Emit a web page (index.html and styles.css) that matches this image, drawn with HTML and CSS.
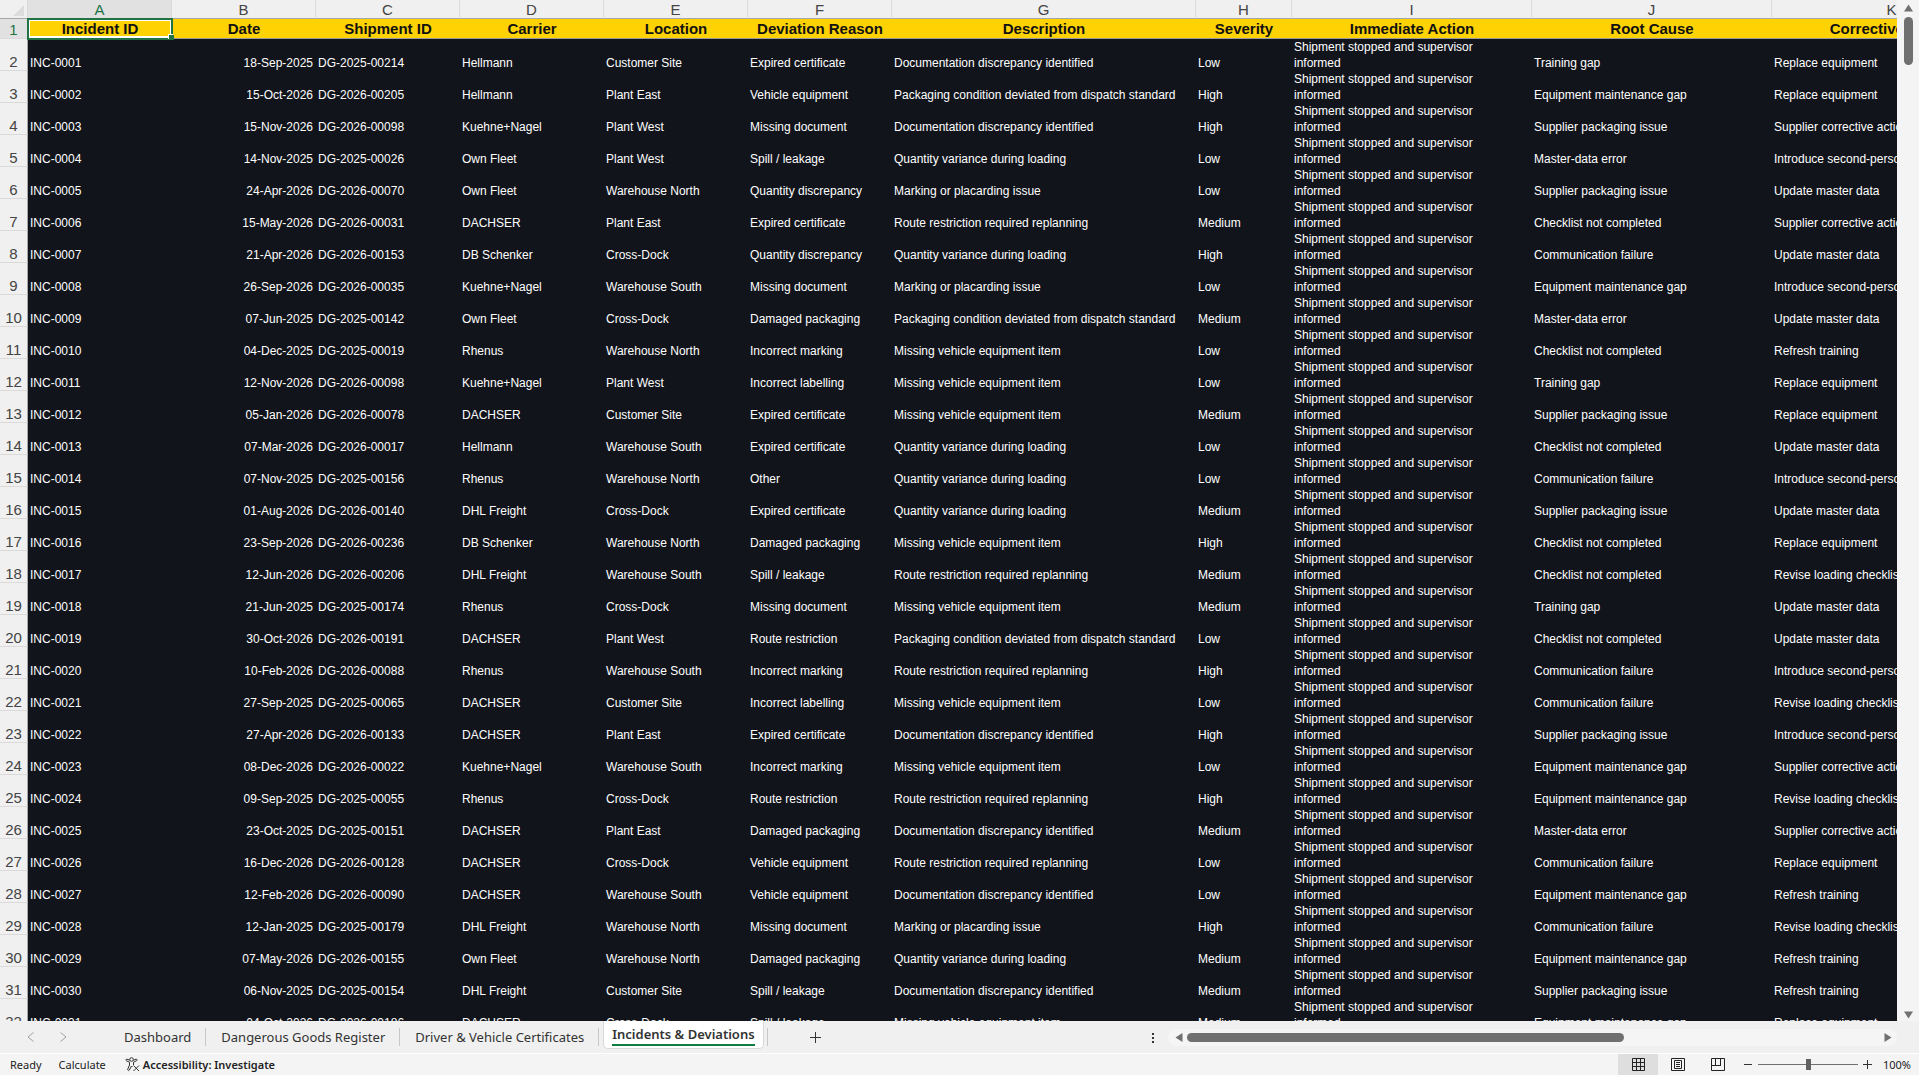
FILE: index.html
```html
<!DOCTYPE html>
<html lang="en">
<head>
  <meta charset="utf-8">
  <title>Incidents &amp; Deviations</title>
  <link rel="stylesheet" href="styles.css">
</head>

<body>

<main class="workbook">
  <div class="sheet-area">
    <div class="sheet">
      <table class="grid">
        <colgroup>
          <col class="col-num">
          <col class="col-m"><col class="col-m"><col class="col-m"><col class="col-m"><col class="col-m"><col class="col-m">
          <col class="col-xl"><col class="col-s"><col class="col-l"><col class="col-l"><col class="col-l">
        </colgroup>
        <thead>
          <tr class="letters">
            <th class="corner"><svg width="11" height="11" viewBox="0 0 11 11"><path d="M11 0V11H0Z" fill="#dcdcdc"/></svg></th>
            <th class="selected">A</th><th>B</th><th>C</th><th>D</th><th>E</th><th>F</th>
            <th>G</th><th>H</th><th>I</th><th>J</th><th>K</th>
          </tr>
          <tr class="titles">
            <th class="num selected">1</th>
            <th class="active-cell">Incident ID</th>
            <th>Date</th>
            <th>Shipment ID</th>
            <th>Carrier</th>
            <th>Location</th>
            <th>Deviation Reason</th>
            <th>Description</th>
            <th>Severity</th>
            <th>Immediate Action</th>
            <th>Root Cause</th>
            <th>Corrective Action</th>
          </tr>
        </thead>
        <tbody id="rows"></tbody>
      </table>
    </div>
    <div class="scroll-v">
      <button class="arrow" aria-label="Scroll up"><svg width="9" height="8" viewBox="0 0 9 8"><path d="M4.500 0.500L9 7.500H0Z"/></svg></button>
      <div class="thumb-v"></div>
      <button class="arrow arrow-end" aria-label="Scroll down"><svg width="9" height="8" viewBox="0 0 9 8"><path d="M4.500 7.500L9 0.500H0Z"/></svg></button>
    </div>
  </div>

  <div class="tab-bar">
    <div class="tab-nav">
      <button aria-label="Previous sheet"><svg width="8" height="10" viewBox="0 0 8 10"><path d="M6.500 0.500L1 5L6.500 9.500"/></svg></button>
      <button aria-label="Next sheet"><svg width="8" height="10" viewBox="0 0 8 10"><path d="M1.500 0.500L7 5L1.500 9.500"/></svg></button>
    </div>
    <nav class="tabs">
      <button class="tab">Dashboard</button>
      <button class="tab">Dangerous Goods Register</button>
      <button class="tab">Driver &amp; Vehicle Certificates</button>
      <button class="tab active"><span>Incidents &amp; Deviations</span></button>
    </nav>
    <button class="add" aria-label="New sheet"><svg width="11" height="11" viewBox="0 0 11 11"><path d="M5.500 0V11M0 5.500H11"/></svg></button>
    <div class="dots"><i></i><i></i><i></i></div>
    <div class="scroll-h">
      <button class="arrow" aria-label="Scroll left"><svg width="8" height="9" viewBox="0 0 8 9"><path d="M0.500 4.500L7.500 0V9Z"/></svg></button>
      <div class="thumb-h"></div>
      <button class="arrow arrow-end" aria-label="Scroll right"><svg width="8" height="9" viewBox="0 0 8 9"><path d="M7.500 4.500L0.500 0V9Z"/></svg></button>
    </div>
  </div>

  <footer class="status">
    <span>Ready</span>
    <span>Calculate</span>
    <button class="access">
      <svg width="15" height="15" viewBox="0 0 15 15"><circle cx="6.500" cy="2.500" r="1.800"/><path d="M4.700 3.200L2 2.200C0.800 2 0.500 3.300 1.500 3.800L4.500 5.200V8L2.700 12.300C2.500 13.500 3.800 14 4.400 13L6.500 9L7.500 10M8.300 3.200L11 2.200C12.200 2 12.500 3.300 11.500 3.800L8.500 5.200V8M8.500 8.500L14 14M14 8.500L8.500 14"/></svg>
      Accessibility: Investigate
    </button>
    <div class="views">
      <button class="current" aria-label="Normal"><svg width="13" height="13" viewBox="0 0 13 13"><path d="M0.500 0.500H12.500V12.500H0.500ZM4.500 0V13M8.500 0V13M0 4.500H13M0 8.500H13"/></svg></button>
      <button aria-label="Page layout"><svg width="14" height="13" viewBox="0 0 14 13"><path d="M0.500 0.500H13.500V12.500H0.500ZM3.500 2.500H10.500V10.500H3.500ZM5 4.500H9M5 6.500H9M5 8.500H9"/></svg></button>
      <button aria-label="Page break preview"><svg width="14" height="13" viewBox="0 0 14 13"><path d="M0.500 0.500H13.500V12.500H0.500ZM4.500 0V7.500M9.500 0V7.500M0 7.500H10"/></svg></button>
    </div>
    <div class="zoom">
      <button aria-label="Zoom out"><svg width="9" height="9" viewBox="0 0 9 9"><path d="M0 4.500H8"/></svg></button>
      <input type="range" min="0" max="100" value="50" aria-label="Zoom">
      <button aria-label="Zoom in"><svg width="9" height="9" viewBox="0 0 9 9"><path d="M0 4.500H9M4.500 0V9"/></svg></button>
      <button class="percent">100%</button>
    </div>
  </footer>
</main>

<script src="script.js"></script>
</body>
</html>
```

FILE: styles.css
```css
* {
  box-sizing: border-box;
}

body {
  margin: 0;
  font-family: "Liberation Sans", Arial, sans-serif;
  background: #f0f0f0;
}

button {
  border: none;
  padding: 0;
  background: none;
  font: inherit;
  color: inherit;
}

svg {
  display: block;
}

.workbook {
  display: flex;
  flex-direction: column;
  height: 100vh;
  overflow: hidden;
}

.sheet-area {
  display: flex;
  flex: 1;
  min-height: 0;
}

.sheet {
  flex: 1;
  min-width: 0;
  overflow: hidden;
  background: #11141b;
}

/* grid */
.grid {
  table-layout: fixed;
  width: 1984px;
  border-collapse: separate;
  border-spacing: 0;
  color: #fff;
  font-size: 12px;
  line-height: 16px;
}

.col-num { width: 28px; }
.col-s { width: 96px; }
.col-m { width: 144px; }
.col-l { width: 240px; }
.col-xl { width: 304px; }

.grid th,
.grid td {
  padding: 0 2px;
}

.letters th {
  height: 19px;
  padding-top: 2px;
  background: #f0f0f0;
  border-right: 1px solid #dadada;
  border-bottom: 1px solid #a6a6a6;
  color: #444;
  font-size: 15px;
  font-weight: normal;
  line-height: 16px;
}

.letters .corner {
  padding: 2px 3px 0 13px;
}

.letters .selected,
.grid .num.selected {
  background: #e1e1e1;
  color: #217346;
}

.titles th {
  height: 20px;
  background: #ffd204;
  border-bottom: 1px solid #9a9a9a;
  color: #111;
  font-size: 15px;
  line-height: 19px;
}

.grid .num {
  padding: 0;
  background: #f0f0f0;
  border-right: 1px solid #a6a6a6;
  border-bottom: 1px solid #dadada;
  color: #444;
  font-size: 15px;
  font-weight: normal;
  line-height: 16px;
  text-align: center;
  vertical-align: bottom;
}

.titles .active-cell {
  position: relative;
  box-shadow: inset 0 0 0 2px #fff;
  outline: 2px solid #217346;
  outline-offset: -1px;
}

.active-cell::after {
  content: "";
  position: absolute;
  right: -2px;
  bottom: -2px;
  width: 5px;
  height: 5px;
  background: #217346;
  box-shadow: -1px -1px 0 #fff;
}

tbody td {
  height: 32px;
  vertical-align: bottom;
  white-space: nowrap;
  overflow: hidden;
}

.grid .date {
  padding-right: 3px;
  text-align: right;
}

.grid .wrap {
  padding-right: 16px;
  white-space: normal;
}

/* scrollbars */
.scroll-v {
  display: flex;
  flex-direction: column;
  align-items: center;
  width: 22px;
  padding: 4px 0 2px;
  background: #f4f4f4;
}

.arrow {
  fill: #707070;
}

.arrow-end {
  margin-top: auto;
}

.thumb-v {
  width: 9px;
  height: 48px;
  margin-top: 5px;
  border-radius: 5px;
  background: #707070;
}

.scroll-h {
  display: flex;
  align-items: center;
  width: 38%;
  height: 17px;
  margin-right: 22px;
  padding: 0 5px 0 7px;
  border-radius: 9px;
  background: #f5f5f5;
}

.scroll-h .arrow-end {
  margin: 0 0 0 auto;
}

.thumb-h {
  width: 61%;
  height: 9px;
  margin-left: 4px;
  border-radius: 5px;
  background: #707070;
}

/* sheet tabs */
.tab-bar {
  display: flex;
  align-items: center;
  height: 32px;
  background: #f0f0f0;
  font-family: "Noto Sans", sans-serif;
  font-size: 13px;
  color: #333;
}

.tab-nav {
  display: flex;
  gap: 24px;
  width: 109px;
  padding-left: 27px;
  fill: none;
  stroke: #a0a0a0;
}

.tabs {
  display: flex;
  align-self: stretch;
}

.tab {
  position: relative;
  padding: 0 15px;
  white-space: nowrap;
}

.tab::after {
  content: "";
  position: absolute;
  top: 7px;
  right: 0;
  width: 1px;
  height: 18px;
  background: #c8c8c8;
}

.tab.active {
  padding: 0 4px 4px;
  font-weight: 600;
}

.tab.active span {
  display: block;
  height: 28px;
  padding: 0 8px;
  border: 1px solid #d8d8d8;
  border-top: none;
  border-radius: 0 0 5px 5px;
  background: #fff;
  line-height: 26px;
}

.tab.active span::after {
  content: "";
  display: block;
  height: 2px;
  margin-top: -3px;
  background: #107c41;
}

.add {
  margin-left: 42px;
  stroke: #333;
}

.dots {
  display: grid;
  gap: 2px;
  margin: 2px 14px 0 auto;
}

.dots i {
  width: 2px;
  height: 2px;
  background: #333;
}

/* status bar */
.status {
  display: flex;
  align-items: center;
  height: 22px;
  padding-left: 10px;
  border-top: 1px solid #fff;
  background: #f4f4f4;
  font-family: "Noto Sans", sans-serif;
  font-size: 11px;
  color: #222;
}

.status span {
  margin-right: 17px;
}

.access {
  display: flex;
  align-items: center;
  gap: 3px;
  margin-left: 2px;
  font-weight: 600;
}

.access svg {
  fill: none;
  stroke: #333;
}

.views {
  display: flex;
  align-self: stretch;
  margin-left: auto;
}

.views button {
  display: flex;
  align-items: center;
  justify-content: center;
  width: 40px;
  fill: none;
  stroke: #222;
}

.views .current {
  background: #dedede;
}

.zoom {
  display: flex;
  align-items: center;
  padding-left: 6px;
  stroke: #333;
}

.zoom input {
  appearance: none;
  width: 100px;
  height: 11px;
  margin: 0 5px;
  background: linear-gradient(#707070, #707070) center / 100% 1px no-repeat;
}

.zoom input::-webkit-slider-thumb {
  appearance: none;
  width: 5px;
  height: 11px;
  background: #606060;
}

.percent {
  width: 47px;
  padding-right: 8px;
  text-align: right;
}
```

FILE: script.js
```js
const rows = [
  ['18-Sep-2025', 'DG-2025-00214', 'Hellmann', 'Customer Site', 'Expired certificate', 'Documentation discrepancy identified', 'Low', 'Training gap', 'Replace equipment'],
  ['15-Oct-2026', 'DG-2026-00205', 'Hellmann', 'Plant East', 'Vehicle equipment', 'Packaging condition deviated from dispatch standard', 'High', 'Equipment maintenance gap', 'Replace equipment'],
  ['15-Nov-2026', 'DG-2026-00098', 'Kuehne+Nagel', 'Plant West', 'Missing document', 'Documentation discrepancy identified', 'High', 'Supplier packaging issue', 'Supplier corrective action'],
  ['14-Nov-2025', 'DG-2025-00026', 'Own Fleet', 'Plant West', 'Spill / leakage', 'Quantity variance during loading', 'Low', 'Master-data error', 'Introduce second-person check'],
  ['24-Apr-2026', 'DG-2026-00070', 'Own Fleet', 'Warehouse North', 'Quantity discrepancy', 'Marking or placarding issue', 'Low', 'Supplier packaging issue', 'Update master data'],
  ['15-May-2026', 'DG-2026-00031', 'DACHSER', 'Plant East', 'Expired certificate', 'Route restriction required replanning', 'Medium', 'Checklist not completed', 'Supplier corrective action'],
  ['21-Apr-2026', 'DG-2026-00153', 'DB Schenker', 'Cross-Dock', 'Quantity discrepancy', 'Quantity variance during loading', 'High', 'Communication failure', 'Update master data'],
  ['26-Sep-2026', 'DG-2026-00035', 'Kuehne+Nagel', 'Warehouse South', 'Missing document', 'Marking or placarding issue', 'Low', 'Equipment maintenance gap', 'Introduce second-person check'],
  ['07-Jun-2025', 'DG-2025-00142', 'Own Fleet', 'Cross-Dock', 'Damaged packaging', 'Packaging condition deviated from dispatch standard', 'Medium', 'Master-data error', 'Update master data'],
  ['04-Dec-2025', 'DG-2025-00019', 'Rhenus', 'Warehouse North', 'Incorrect marking', 'Missing vehicle equipment item', 'Low', 'Checklist not completed', 'Refresh training'],
  ['12-Nov-2026', 'DG-2026-00098', 'Kuehne+Nagel', 'Plant West', 'Incorrect labelling', 'Missing vehicle equipment item', 'Low', 'Training gap', 'Replace equipment'],
  ['05-Jan-2026', 'DG-2026-00078', 'DACHSER', 'Customer Site', 'Expired certificate', 'Missing vehicle equipment item', 'Medium', 'Supplier packaging issue', 'Replace equipment'],
  ['07-Mar-2026', 'DG-2026-00017', 'Hellmann', 'Warehouse South', 'Expired certificate', 'Quantity variance during loading', 'Low', 'Checklist not completed', 'Update master data'],
  ['07-Nov-2025', 'DG-2025-00156', 'Rhenus', 'Warehouse North', 'Other', 'Quantity variance during loading', 'Low', 'Communication failure', 'Introduce second-person check'],
  ['01-Aug-2026', 'DG-2026-00140', 'DHL Freight', 'Cross-Dock', 'Expired certificate', 'Quantity variance during loading', 'Medium', 'Supplier packaging issue', 'Update master data'],
  ['23-Sep-2026', 'DG-2026-00236', 'DB Schenker', 'Warehouse North', 'Damaged packaging', 'Missing vehicle equipment item', 'High', 'Checklist not completed', 'Replace equipment'],
  ['12-Jun-2026', 'DG-2026-00206', 'DHL Freight', 'Warehouse South', 'Spill / leakage', 'Route restriction required replanning', 'Medium', 'Checklist not completed', 'Revise loading checklist'],
  ['21-Jun-2025', 'DG-2025-00174', 'Rhenus', 'Cross-Dock', 'Missing document', 'Missing vehicle equipment item', 'Medium', 'Training gap', 'Update master data'],
  ['30-Oct-2026', 'DG-2026-00191', 'DACHSER', 'Plant West', 'Route restriction', 'Packaging condition deviated from dispatch standard', 'Low', 'Checklist not completed', 'Update master data'],
  ['10-Feb-2026', 'DG-2026-00088', 'Rhenus', 'Warehouse South', 'Incorrect marking', 'Route restriction required replanning', 'High', 'Communication failure', 'Introduce second-person check'],
  ['27-Sep-2025', 'DG-2025-00065', 'DACHSER', 'Customer Site', 'Incorrect labelling', 'Missing vehicle equipment item', 'Low', 'Communication failure', 'Revise loading checklist'],
  ['27-Apr-2026', 'DG-2026-00133', 'DACHSER', 'Plant East', 'Expired certificate', 'Documentation discrepancy identified', 'High', 'Supplier packaging issue', 'Introduce second-person check'],
  ['08-Dec-2026', 'DG-2026-00022', 'Kuehne+Nagel', 'Warehouse South', 'Incorrect marking', 'Missing vehicle equipment item', 'Low', 'Equipment maintenance gap', 'Supplier corrective action'],
  ['09-Sep-2025', 'DG-2025-00055', 'Rhenus', 'Cross-Dock', 'Route restriction', 'Route restriction required replanning', 'High', 'Equipment maintenance gap', 'Revise loading checklist'],
  ['23-Oct-2025', 'DG-2025-00151', 'DACHSER', 'Plant East', 'Damaged packaging', 'Documentation discrepancy identified', 'Medium', 'Master-data error', 'Supplier corrective action'],
  ['16-Dec-2026', 'DG-2026-00128', 'DACHSER', 'Cross-Dock', 'Vehicle equipment', 'Route restriction required replanning', 'Low', 'Communication failure', 'Replace equipment'],
  ['12-Feb-2026', 'DG-2026-00090', 'DACHSER', 'Warehouse South', 'Vehicle equipment', 'Documentation discrepancy identified', 'Low', 'Equipment maintenance gap', 'Refresh training'],
  ['12-Jan-2025', 'DG-2025-00179', 'DHL Freight', 'Warehouse North', 'Missing document', 'Marking or placarding issue', 'High', 'Communication failure', 'Revise loading checklist'],
  ['07-May-2026', 'DG-2026-00155', 'Own Fleet', 'Warehouse North', 'Damaged packaging', 'Quantity variance during loading', 'Medium', 'Equipment maintenance gap', 'Refresh training'],
  ['06-Nov-2025', 'DG-2025-00154', 'DHL Freight', 'Customer Site', 'Spill / leakage', 'Documentation discrepancy identified', 'Medium', 'Supplier packaging issue', 'Refresh training'],
  ['04-Oct-2026', 'DG-2026-00186', 'DACHSER', 'Cross-Dock', 'Spill / leakage', 'Missing vehicle equipment item', 'Medium', 'Equipment maintenance gap', 'Replace equipment']
];

const action = 'Shipment stopped and supervisor informed';

let html = '';
rows.forEach((r, i) => {
  let id = 'INC-' + String(i + 1).padStart(4, '0');
  html += `<tr><th class="num">${i + 2}</th><td>${id}</td><td class="date">${r[0]}</td>`;
  html += r.slice(1, 7).map(v => `<td>${v}</td>`).join('');
  html += `<td class="wrap">${action}</td><td>${r[7]}</td><td>${r[8]}</td></tr>`;
});

document.getElementById('rows').innerHTML = html;
```
